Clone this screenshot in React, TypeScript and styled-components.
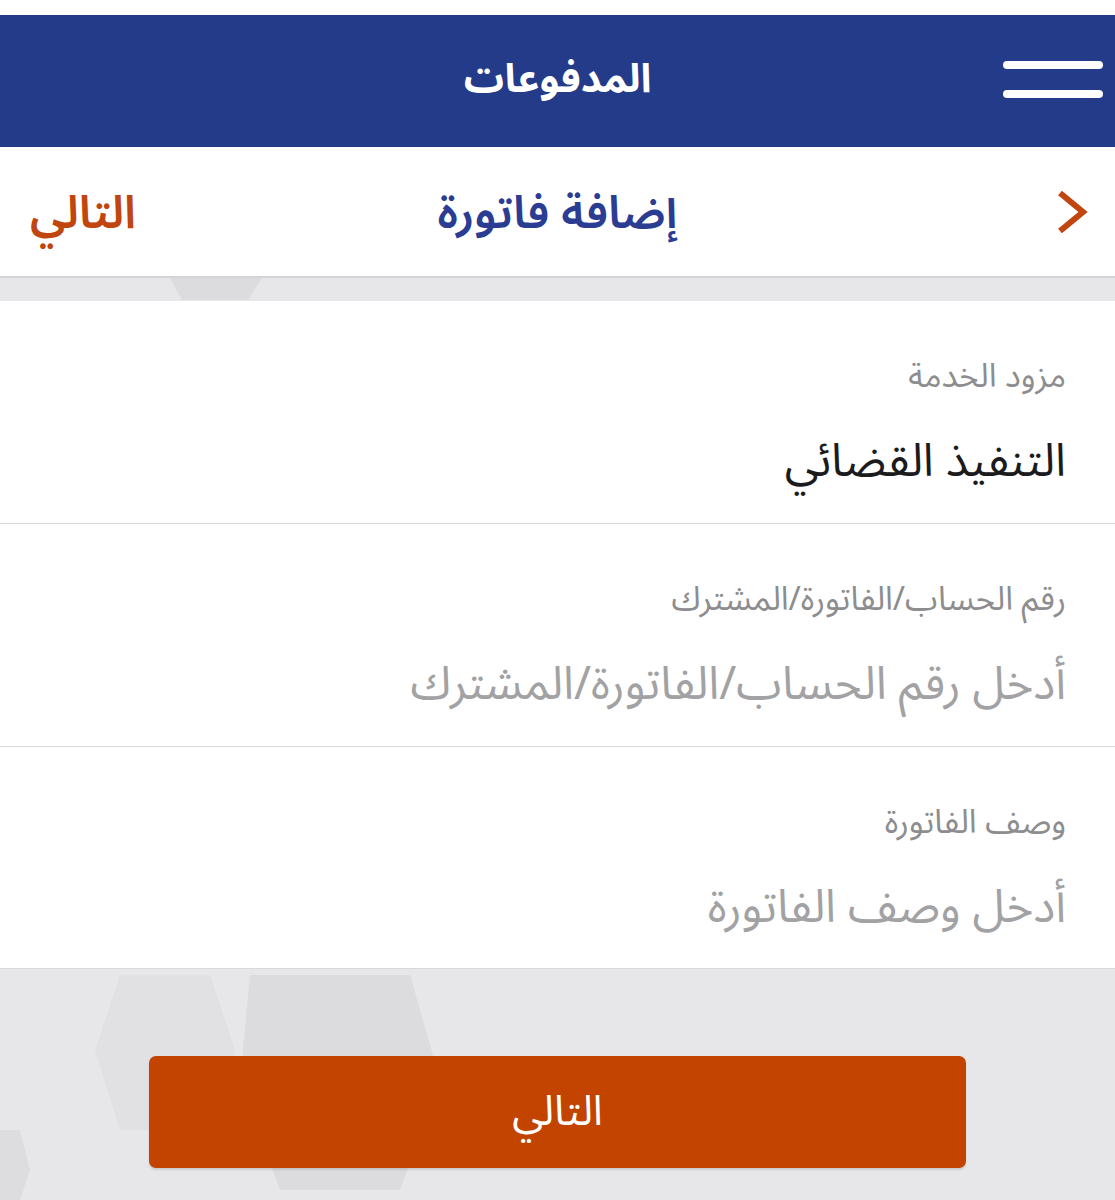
import React from "react";
import styled, { createGlobalStyle } from "styled-components";

const Global = createGlobalStyle`
  html, body { margin: 0; padding: 0; background: #ffffff; }
  body { font-family: "Noto Sans Arabic", "DejaVu Sans", sans-serif; }
  * { box-sizing: border-box; }
`;

const Page = styled.div`
  width: 1115px;
  height: 1200px;
  display: flex;
  flex-direction: column;
  direction: rtl;
  background: #e7e7e9;
  position: relative;
  overflow: hidden;
  font-family: "Noto Sans Arabic", "DejaVu Sans", sans-serif;
`;

const TopStrip = styled.div`
  height: 15px;
  background: #ffffff;
`;

const AppBar = styled.header`
  height: 132px;
  background: #243b8a;
  display: flex;
  align-items: center;
  justify-content: center;
  position: relative;
`;

const AppTitle = styled.h1`
  margin: 0;
  color: #ffffff;
  font-size: 40px;
  font-weight: 700;
  line-height: 1;
  transform: translateY(-1px);
`;

const MenuButton = styled.div`
  position: absolute;
  right: 12px;
  top: 46px;
  width: 100px;
  display: flex;
  flex-direction: column;
  gap: 21px;
`;

const MenuLine = styled.span`
  display: block;
  height: 8px;
  border-radius: 4px;
  background: #ffffff;
`;

const SubHeader = styled.div`
  height: 131px;
  background: #ffffff;
  border-bottom: 2px solid #d4d4d6;
  display: flex;
  align-items: center;
  justify-content: space-between;
  padding: 0 26px 0 30px;
  position: relative;
  z-index: 1;
`;

const SubTitle = styled.h2`
  position: absolute;
  left: 0;
  right: 0;
  text-align: center;
  margin: 0;
  color: #2b3d92;
  font-size: 46px;
  font-weight: 600;
  line-height: 1;
  pointer-events: none;
  transform: translateY(2px);
`;

const NextLink = styled.span`
  color: #c1450f;
  font-size: 46px;
  font-weight: 600;
  line-height: 1;
  transform: translateY(2px);
`;

const Gap = styled.div`
  height: 23px;
`;

const Form = styled.section`
  background: #ffffff;
  display: flex;
  flex-direction: column;
  position: relative;
  z-index: 1;
`;

const Row = styled.div<{ $last?: boolean }>`
  height: ${(p) => (p.$last ? 222 : 223)}px;
  border-bottom: 1.5px solid #d9d9db;
  padding: 48px 49px 0 49px;
  display: flex;
  flex-direction: column;
`;

const Label = styled.div`
  color: #8d8d8f;
  font-size: 33px;
  line-height: 56px;
  height: 56px;
  white-space: nowrap;
`;

const Value = styled.div<{ $placeholder?: boolean }>`
  margin-top: 19px;
  color: ${(p) => (p.$placeholder ? "#a2a2a4" : "#1b1b1d")};
  font-size: 46px;
  line-height: 76px;
  height: 76px;
  white-space: nowrap;
`;

const Footer = styled.div`
  flex: 1;
  display: flex;
  justify-content: center;
  padding-top: 87px;
  position: relative;
  z-index: 1;
`;

const PrimaryButton = styled.button`
  width: 817px;
  height: 112px;
  border: none;
  border-radius: 7px;
  background: #c24400;
  color: #ffffff;
  font-family: inherit;
  font-size: 42px;
  line-height: 1;
  box-shadow: 0 2px 2px rgba(0, 0, 0, 0.12);
`;

const BgArt = styled.svg`
  position: absolute;
  left: 0;
  top: 0;
  width: 1115px;
  height: 1200px;
  z-index: 0;
`;

const Chevron = () => (
  <svg width="34" height="46" viewBox="0 0 34 46">
    <path d="M5 4 L28 23 L5 42" fill="none" stroke="#c1450f" strokeWidth="6" />
  </svg>
);

export default function App() {
  return (
    <>
      <Global />
      <Page>
        <BgArt viewBox="0 0 1115 1200">
          <polygon points="170,278 262,278 248,300 182,300" fill="#dcdcdf" />
          <polygon points="120,975 210,975 235,1050 210,1130 120,1130 95,1050" fill="#e1e1e4" />
          <polygon points="250,975 410,975 440,1080 400,1190 280,1190 240,1080" fill="#dcdcdf" />
          <polygon points="0,1130 20,1130 30,1170 20,1200 0,1200" fill="#dddde0" />
        </BgArt>
        <TopStrip />
        <AppBar>
          <MenuButton>
            <MenuLine />
            <MenuLine />
          </MenuButton>
          <AppTitle>المدفوعات</AppTitle>
        </AppBar>
        <SubHeader>
          <Chevron />
          <SubTitle>إضافة فاتورة</SubTitle>
          <NextLink>التالي</NextLink>
        </SubHeader>
        <Gap />
        <Form>
          <Row>
            <Label>مزود الخدمة</Label>
            <Value>التنفيذ القضائي</Value>
          </Row>
          <Row>
            <Label>رقم الحساب/الفاتورة/المشترك</Label>
            <Value $placeholder>أدخل رقم الحساب/الفاتورة/المشترك</Value>
          </Row>
          <Row $last>
            <Label>وصف الفاتورة</Label>
            <Value $placeholder>أدخل وصف الفاتورة</Value>
          </Row>
        </Form>
        <Footer>
          <PrimaryButton>التالي</PrimaryButton>
        </Footer>
      </Page>
    </>
  );
}
